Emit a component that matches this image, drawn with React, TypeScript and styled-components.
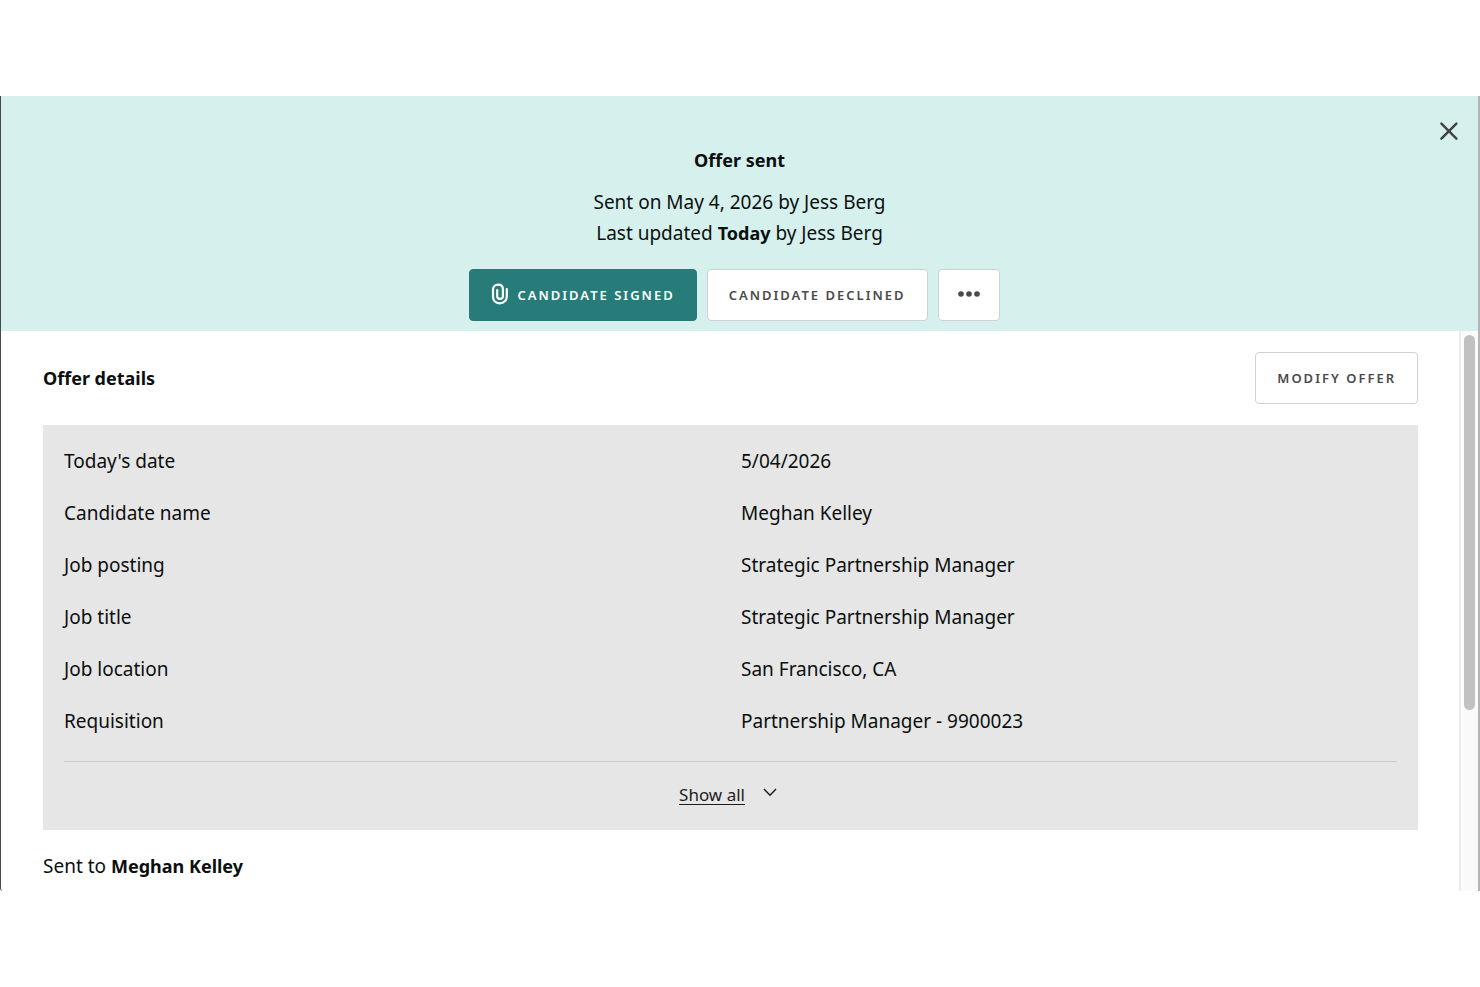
import React from "react";
import styled, { createGlobalStyle } from "styled-components";

const GlobalStyle = createGlobalStyle`
  *, *::before, *::after { box-sizing: border-box; }
  body {
    margin: 0;
    background: #fff;
    color: #0b0f0e;
    font-family: "Noto Sans", sans-serif;
    font-size: 19px;
    line-height: 31px;
  }
  strong { font-size: 18px; }
`;

const Page = styled.main`
  min-height: 100vh;
  padding: 96px 0;
  display: flex;
  flex-direction: column;
`;

const Dialog = styled.section`
  flex: 1;
  display: flex;
  flex-direction: column;
  border-left: 1px solid #4a4a4a;
  border-right: 2px solid #b4b4b4;
  border-bottom-left-radius: 3px;
  overflow: hidden;
`;

const Banner = styled.header`
  position: relative;
  display: flex;
  flex-direction: column;
  align-items: center;
  padding: 49px 0 10px;
  background: #d6f1ed;
  text-align: center;
`;

const Title = styled.h1`
  margin: 0 0 11px;
  font-size: 18px;
  font-weight: 700;
`;

const Meta = styled.p`
  margin: 0;
`;

const CloseButton = styled.button`
  position: absolute;
  top: 25px;
  right: 19px;
  display: flex;
  padding: 0;
  border: 0;
  background: none;
  color: #444;
  cursor: pointer;
`;

const Actions = styled.div`
  display: flex;
  margin-top: 20px;
  padding-right: 10px;
  gap: 10px;
`;

const Button = styled.button<{ $primary?: boolean }>`
  display: inline-flex;
  align-items: center;
  gap: 8px;
  height: 52px;
  padding: 0 21px;
  border: 1px solid ${(p) => (p.$primary ? "#277b78" : "#d0d0d0")};
  border-radius: 4px;
  background: ${(p) => (p.$primary ? "#277b78" : "#fff")};
  color: ${(p) => (p.$primary ? "#fff" : "#4a4a4a")};
  font-family: "Noto Sans", sans-serif;
  font-size: 13px;
  font-weight: 600;
  letter-spacing: 2px;
  text-transform: uppercase;
  white-space: nowrap;
  cursor: pointer;
`;

const Body = styled.div`
  flex: 1;
  display: flex;
`;

const Content = styled.div`
  flex: 1;
  padding: 21px 41px 8px 42px;
`;

const SectionHead = styled.div`
  display: flex;
  align-items: center;
  justify-content: space-between;
  margin-bottom: 21px;
`;

const SectionTitle = styled.h2`
  margin: 0;
  font-size: 18px;
  font-weight: 700;
`;

const Card = styled.div`
  padding: 10px 21px;
  margin-bottom: 21px;
  background: #e6e6e6;
`;

const Details = styled.dl`
  margin: 0;
  padding-bottom: 14px;
  border-bottom: 1px solid #cbcbcb;
`;

const Row = styled.div`
  display: grid;
  grid-template-columns: 1fr 1fr;
  column-gap: 21px;
  line-height: 52px;
`;

const Term = styled.dt``;

const Value = styled.dd`
  margin: 0;
`;

const ShowAll = styled.button`
  display: flex;
  align-items: center;
  justify-content: center;
  gap: 18px;
  width: 100%;
  height: 58px;
  padding: 6px 5px 0 0;
  border: 0;
  background: none;
  color: #1c1c1c;
  font: inherit;
  font-size: 17px;
  cursor: pointer;
`;

const Underlined = styled.span`
  text-decoration: underline;
  text-decoration-thickness: 1px;
  text-underline-offset: 3px;
`;

const Track = styled.div`
  width: 19px;
  padding: 4px 3px;
  border-left: 2px solid #ececec;
  background: #fafafa;
`;

const Thumb = styled.div`
  height: 68%;
  border-radius: 6px;
  background: #c1c1c1;
`;

const details = [
  ["Today's date", "5/04/2026"],
  ["Candidate name", "Meghan Kelley"],
  ["Job posting", "Strategic Partnership Manager"],
  ["Job title", "Strategic Partnership Manager"],
  ["Job location", "San Francisco, CA"],
  ["Requisition", "Partnership Manager - 9900023"],
];

const CloseIcon = () => (
  <svg width="20" height="20" viewBox="0 0 20 20" fill="none" stroke="currentColor" strokeWidth="2.5" strokeLinecap="round" aria-hidden="true">
    <path d="M2.4 2.6 17.4 17.6M17.4 2.6 2.4 17.6" />
  </svg>
);

const ClipIcon = () => (
  <svg width="18" height="24" viewBox="0 0 18 24" fill="none" stroke="currentColor" strokeWidth="2.2" strokeLinecap="round" aria-hidden="true">
    <path d="M11.9 12V6.3C11.9 3.5 10 1.6 7.1 1.6S2 3.6 2 6.5v7c0 3.8 2.5 6.8 6.7 6.8s7.1-3 7.1-6.8V6.2M11.9 11.5v1.7c0 1.7-1 2.6-2.8 2.6s-2.9-.9-2.9-2.6V7" />
  </svg>
);

const DotsIcon = () => (
  <svg width="18" height="8" viewBox="1 0 18 8" fill="currentColor" aria-hidden="true" overflow="visible">
    <circle cx="2" cy="3" r="2.8" />
    <circle cx="10" cy="3" r="2.8" />
    <circle cx="18" cy="3" r="2.8" />
  </svg>
);

const ChevronIcon = () => (
  <svg width="14" height="12" viewBox="0 0 14 12" fill="none" stroke="currentColor" strokeWidth="1.4" aria-hidden="true">
    <path d="M1 1 7 7.3 13 1" />
  </svg>
);

export default function App() {
  return (
    <>
      <GlobalStyle />
      <Page>
        <Dialog aria-labelledby="offer-title">
          <Banner>
            <Title id="offer-title">Offer sent</Title>
            <Meta>Sent on May 4, 2026 by Jess Berg</Meta>
            <Meta>
              Last updated <strong>Today</strong> by Jess Berg
            </Meta>
            <Actions>
              <Button type="button" $primary>
                <ClipIcon />
                Candidate signed
              </Button>
              <Button type="button">Candidate declined</Button>
              <Button type="button" aria-label="More actions">
                <DotsIcon />
              </Button>
            </Actions>
            <CloseButton type="button" aria-label="Close">
              <CloseIcon />
            </CloseButton>
          </Banner>
          <Body>
            <Content>
              <SectionHead>
                <SectionTitle>Offer details</SectionTitle>
                <Button type="button">Modify offer</Button>
              </SectionHead>
              <Card>
                <Details>
                  {details.map(([term, value]) => (
                    <Row key={term}>
                      <Term>{term}</Term>
                      <Value>{value}</Value>
                    </Row>
                  ))}
                </Details>
                <ShowAll type="button">
                  <Underlined>Show all</Underlined>
                  <ChevronIcon />
                </ShowAll>
              </Card>
              <Meta>
                Sent to <strong>Meghan Kelley</strong>
              </Meta>
            </Content>
            <Track>
              <Thumb />
            </Track>
          </Body>
        </Dialog>
      </Page>
    </>
  );
}
